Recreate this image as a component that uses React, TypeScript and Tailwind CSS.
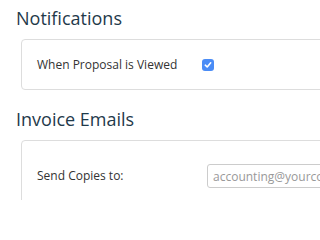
import React from "react";

export default function App() {
  return (
    <div
      className="w-full h-[200px] overflow-hidden bg-white pl-[16px]"
      style={{ fontFamily: '"Open Sans", sans-serif' }}
    >
      <h2 className="pt-[6px] text-[18px] leading-[24px] text-[#1f3a4b] font-normal">
        Notifications
      </h2>
      <div className="mt-[9px] ml-[5px] w-[600px] h-[51px] rounded-[4px] border border-[#dddddd] flex items-center pl-[15px]">
        <span className="w-[165px] text-[12px] leading-[18px] text-[#333333]">
          When Proposal is Viewed
        </span>
        <span className="w-[12px] h-[12px] rounded-[3px] bg-[#4a8cf6] flex items-center justify-center">
          <svg width="8" height="8" viewBox="0 0 8 8" fill="none">
            <path d="M1.3 4.2 L3.2 6 L6.7 1.8" stroke="white" strokeWidth="1.6" strokeLinecap="round" strokeLinejoin="round" />
          </svg>
        </span>
      </div>
      <h2 className="mt-[17px] text-[18px] leading-[24px] text-[#1f3a4b] font-normal">
        Invoice Emails
      </h2>
      <div className="mt-[9px] ml-[5px] w-[600px] h-[80px] rounded-[4px] border border-[#dddddd] pl-[15px] pt-[23px]">
        <div className="flex items-center h-[24px]">
          <span className="w-[170px] text-[12px] leading-[18px] text-[#333333]">
            Send Copies to:
          </span>
          <input
            className="w-[200px] h-[24px] rounded-[3px] border border-[#cccccc] px-[5px] text-[12px] text-[#333333] placeholder:text-[#999999] outline-none"
            style={{ fontFamily: '"Open Sans", sans-serif' }}
            placeholder="accounting@yourcompany.com"
          />
        </div>
      </div>
    </div>
  );
}
